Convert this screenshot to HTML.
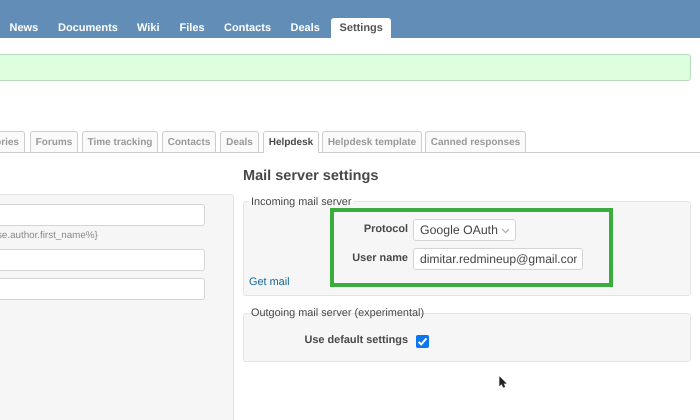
<!DOCTYPE html>
<html>
<head>
<meta charset="utf-8">
<style>
html,body{margin:0;padding:0;background:#fff;overflow:hidden;width:700px;height:420px}
#w{left:0;top:0;width:700px;height:420px;overflow:hidden;background:#fff;font-family:"Liberation Sans",sans-serif;color:#484848;text-rendering:geometricPrecision;filter:blur(.25px)}
div,span,a{position:absolute;box-sizing:border-box;white-space:nowrap}
.m{color:#fff;font-weight:bold;font-size:11px;top:22px;line-height:13px}
.t{top:131px;height:21px;border:1px solid #ccc;border-bottom:0;border-radius:3px 3px 0 0;background:#fafafa;color:#999;font-weight:bold;font-size:10px;line-height:21px;text-align:center}
.i{background:#fff;border:1px solid #d4d4d4;border-radius:3px}
.f{background:#f6f6f6;border:1px solid #e4e4e4;border-radius:3px}
.l{font-size:10.9px;line-height:13px;color:#484848}
.b{font-size:10.9px;font-weight:bold;line-height:13px;color:#484848;text-align:right}
</style>
</head>
<body>
<div id="w">
<div style="left:0;top:0;width:700px;height:38px;background:#628db6"></div>
<span class="m" style="left:9.5px">News</span>
<span class="m" style="left:58px">Documents</span>
<span class="m" style="left:137px">Wiki</span>
<span class="m" style="left:179.5px">Files</span>
<span class="m" style="left:224px">Contacts</span>
<span class="m" style="left:290.5px">Deals</span>
<div style="left:331px;top:18px;width:60px;height:20px;background:#fff;border-radius:3px 3px 0 0"></div>
<span class="m" style="left:339.5px;color:#555">Settings</span>

<div style="left:-4px;top:54px;width:695px;height:27px;background:#dfd;border:1px solid #b5dcbc;border-radius:3px"></div>

<div style="left:0;top:152px;width:700px;height:1px;background:#ccc"></div>
<div class="t" style="left:-30px;width:55px;text-align:right;padding-right:5px">ories</div>
<div class="t" style="left:30px;width:48px">Forums</div>
<div class="t" style="left:82px;width:76px">Time tracking</div>
<div class="t" style="left:162px;width:54px">Contacts</div>
<div class="t" style="left:220px;width:39px">Deals</div>
<div class="t" style="left:263px;width:56px;height:22px;background:#fff;color:#484848;z-index:2">Helpdesk</div>
<div class="t" style="left:322px;width:100px">Helpdesk template</div>
<div class="t" style="left:425px;width:101px">Canned responses</div>

<div class="f" style="left:-5px;top:194px;width:239px;height:240px"></div>
<div class="i" style="left:-5px;top:204px;width:210px;height:22px"></div>
<span style="left:-3px;top:229px;font-size:9.8px;line-height:13px;color:#888">se.author.first_name%}</span>
<div class="i" style="left:-5px;top:249px;width:210px;height:22px"></div>
<div class="i" style="left:-5px;top:278px;width:210px;height:22px"></div>

<span style="left:243px;top:168px;font-size:14.5px;font-weight:bold;line-height:17px;color:#484848">Mail server settings</span>

<div class="f" style="left:243px;top:201px;width:448px;height:95px"></div>
<span class="l" style="left:249px;top:196px;background:#fff;padding:0 2px;height:6px;overflow:visible">Incoming mail server</span>
<a class="l" style="left:249px;top:276px;color:#169">Get mail</a>

<div class="f" style="left:243px;top:313px;width:448px;height:49px"></div>
<span class="l" style="left:249px;top:307px;background:#fff;padding:0 2px;height:6px;overflow:visible">Outgoing mail server (experimental)</span>
<span class="b" style="left:268px;width:140px;top:334px">Use default settings</span>
<div style="left:416px;top:335px;width:13px;height:13px;background:#0b76f0;border-radius:2px">
<svg width="13" height="13" viewBox="0 0 13 13" style="display:block"><path d="M2.6 6.8L5.2 9.4L10.4 3.4" fill="none" stroke="#fff" stroke-width="2"/></svg>
</div>

<span class="b" style="left:340px;width:68px;top:223px">Protocol</span>
<span class="b" style="left:340px;width:68px;top:252px">User name</span>
<div class="i" style="left:413px;top:219px;width:103px;height:22px"></div>
<span style="left:420px;top:223px;font-size:12.3px;line-height:15px;color:#444">Google OAuth</span>
<svg width="10" height="6" viewBox="0 0 10 6" style="position:absolute;left:500.5px;top:228px"><path d="M1 1L4.5 4.5L8 1" fill="none" stroke="#aaa" stroke-width="1.2"/></svg>
<div class="i" style="left:413px;top:248px;width:170px;height:22px"></div>
<div style="left:420px;top:252px;width:156.5px;height:16px;overflow:hidden"><span style="left:0;top:0;font-size:12.1px;line-height:15px;color:#444">dimitar.redmineup@gmail.com</span></div>

<div style="left:330px;top:208px;width:283px;height:79px;border:4px solid #38ac3c"></div>

<svg width="10" height="13" viewBox="0 0 10 13" style="position:absolute;left:499px;top:376px"><path d="M0.5 0.5V10L2.7 8L4.3 11.5L6 10.8L4.5 7.5H7.4Z" fill="#222" stroke="#444" stroke-width=".5"/></svg>
</div>
</body>
</html>
